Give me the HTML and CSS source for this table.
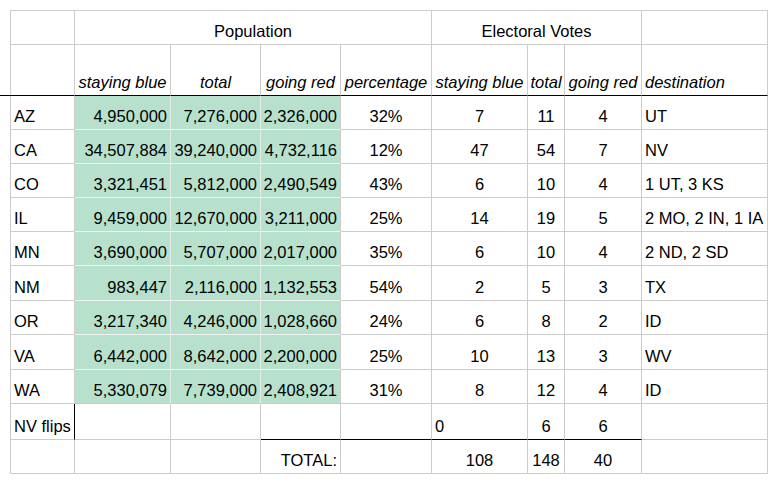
FILE: index.html
```html
<!DOCTYPE html>
<html lang="en">
<head>
<meta charset="utf-8">
<title>Electoral Votes</title>
<link rel="stylesheet" href="styles.css">
</head>
<body>
<div class="sheet">
  <div class="c"></div>
  <div class="c m span4">Population</div>
  <div class="c m span3">Electoral Votes</div>
  <div class="c"></div>

  <div class="c hd"></div>
  <div class="c hd m i">staying blue</div>
  <div class="c hd m i">total</div>
  <div class="c hd m i">going red</div>
  <div class="c hd m i">percentage</div>
  <div class="c hd m i">staying blue</div>
  <div class="c hd m i">total</div>
  <div class="c hd m i">going red</div>
  <div class="c hd i">destination</div>

  <div class="c">AZ</div><div class="c r g">4,950,000</div><div class="c r g">7,276,000</div><div class="c r g ge">2,326,000</div><div class="c m">32%</div><div class="c m">7</div><div class="c m">11</div><div class="c m">4</div><div class="c">UT</div>
  <div class="c">CA</div><div class="c r g">34,507,884</div><div class="c r g">39,240,000</div><div class="c r g ge">4,732,116</div><div class="c m">12%</div><div class="c m">47</div><div class="c m">54</div><div class="c m">7</div><div class="c">NV</div>
  <div class="c">CO</div><div class="c r g">3,321,451</div><div class="c r g">5,812,000</div><div class="c r g ge">2,490,549</div><div class="c m">43%</div><div class="c m">6</div><div class="c m">10</div><div class="c m">4</div><div class="c">1 UT, 3 KS</div>
  <div class="c">IL</div><div class="c r g">9,459,000</div><div class="c r g">12,670,000</div><div class="c r g ge">3,211,000</div><div class="c m">25%</div><div class="c m">14</div><div class="c m">19</div><div class="c m">5</div><div class="c">2 MO, 2 IN, 1 IA</div>
  <div class="c">MN</div><div class="c r g">3,690,000</div><div class="c r g">5,707,000</div><div class="c r g ge">2,017,000</div><div class="c m">35%</div><div class="c m">6</div><div class="c m">10</div><div class="c m">4</div><div class="c">2 ND, 2 SD</div>
  <div class="c">NM</div><div class="c r g">983,447</div><div class="c r g">2,116,000</div><div class="c r g ge">1,132,553</div><div class="c m">54%</div><div class="c m">2</div><div class="c m">5</div><div class="c m">3</div><div class="c">TX</div>
  <div class="c">OR</div><div class="c r g">3,217,340</div><div class="c r g">4,246,000</div><div class="c r g ge">1,028,660</div><div class="c m">24%</div><div class="c m">6</div><div class="c m">8</div><div class="c m">2</div><div class="c">ID</div>
  <div class="c">VA</div><div class="c r g">6,442,000</div><div class="c r g">8,642,000</div><div class="c r g ge">2,200,000</div><div class="c m">25%</div><div class="c m">10</div><div class="c m">13</div><div class="c m">3</div><div class="c">WV</div>
  <div class="c">WA</div><div class="c r g gb">5,330,079</div><div class="c r g gb">7,739,000</div><div class="c r g gb ge">2,408,921</div><div class="c m">31%</div><div class="c m">8</div><div class="c m">12</div><div class="c m">4</div><div class="c">ID</div>

  <div class="c lbl">NV flips</div><div class="c"></div><div class="c"></div><div class="c ul"></div><div class="c ul"></div><div class="c ul">0</div><div class="c m ul">6</div><div class="c m ul">6</div><div class="c"></div>

  <div class="c"></div><div class="c"></div><div class="c"></div><div class="c r">TOTAL:</div><div class="c"></div><div class="c m">108</div><div class="c m">148</div><div class="c m">40</div><div class="c"></div>
</div>
</body>
</html>
```

FILE: styles.css
```css
html, body {
  margin: 0;
  padding: 0;
  background: #ffffff;
}

body {
  padding: 10px 0 0 10px;
  font-family: "Liberation Sans", Arial, sans-serif;
  color: #000000;
}

.sheet {
  position: relative;
  display: grid;
  width: max-content;
  grid-template-columns: 64px 96px 90px 80px 91px 96px 37px 77px 126px;
  grid-template-rows: 34px 51px 34px 34px 34px 34px 34px 35px 34px 35px 34px 36px 34px;
  border-left: 1px solid #cccccc;
  border-top: 1px solid #cccccc;
}

.sheet::before {
  content: "";
  position: absolute;
  left: -11px;
  top: 84px;
  width: 11px;
  height: 1px;
  background: #000000;
}

.c {
  box-sizing: border-box;
  display: flex;
  align-items: flex-end;
  justify-content: flex-start;
  padding: 0 3px 4px 3px;
  border-right: 1px solid #cccccc;
  border-bottom: 1px solid #cccccc;
  font-size: 16.5px;
  line-height: 18px;
  white-space: nowrap;
}

.r { justify-content: flex-end; }
.m { justify-content: center; }
.i { font-style: italic; }

.span4 { grid-column: span 4; }
.span3 { grid-column: span 3; }

.hd { border-bottom-color: #000000; }

.g {
  background: #b7e1cd;
  border-right-color: #e6ece9;
  border-bottom-color: #eef2f0;
}
.g.ge { border-right-color: #cccccc; }
.g.gb { border-bottom-color: #cccccc; }

.lbl { border-right-color: #000000; }
.ul { border-bottom-color: #000000; }
```
